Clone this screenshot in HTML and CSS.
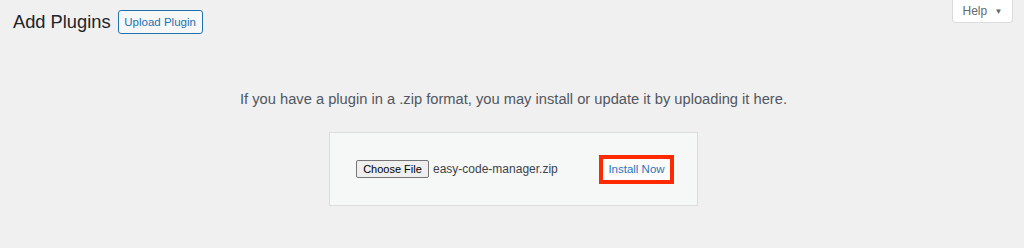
FILE: index.html
```html
<!DOCTYPE html>
<html lang="en">
<head>
    <meta charset="UTF-8">
    <title>Add Plugins</title>
    <link rel="stylesheet" href="styles.css">
</head>
<body>
    <div class="wrap">
        <div class="top-bar">
            <div class="title-row">
                <h1>Add Plugins</h1>
                <a class="page-title-action" href="#">Upload Plugin</a>
            </div>
            <button class="help-link">Help <span class="arrow">&#9660;</span></button>
        </div>

        <div class="upload-plugin">
            <p class="install-help">If you have a plugin in a .zip format, you may install or update it by uploading it here.</p>
            <form class="upload-form">
                <div class="file-field">
                    <span class="file-button">Choose File</span>
                    <span class="file-name">easy-code-manager.zip</span>
                </div>
                <span class="install-now">Install Now</span>
            </form>
        </div>
    </div>
</body>
</html>
```

FILE: styles.css
```css
* {
    margin: 0;
    padding: 0;
    box-sizing: border-box;
}
body {
    font-family: 'Liberation Sans', Arial, sans-serif;
    background-color: #f0f0f1;
    color: #1d2327;
}
.wrap {
    height: 248px;
}
.top-bar {
    display: flex;
    justify-content: space-between;
    align-items: flex-start;
    padding: 0 11px 0 13px;
}
.title-row {
    display: flex;
    align-items: center;
    gap: 7px;
    padding-top: 10px;
}
h1 {
    font-size: 18.3px;
    font-weight: 400;
    line-height: 24px;
    color: #1d2327;
}
.page-title-action {
    display: inline-block;
    height: 24px;
    width: 85px;
    line-height: 22px;
    text-align: center;
    font-size: 11.5px;
    color: #2271b1;
    text-decoration: none;
    border: 1px solid #2271b1;
    border-radius: 3px;
    background-color: #f6f7f7;
}
.help-link {
    height: 23px;
    width: 61px;
    font-family: inherit;
    font-size: 12px;
    color: #646970;
    background-color: #fff;
    border: 1px solid #dcdcde;
    border-top: none;
    border-radius: 0 0 4px 4px;
}
.help-link .arrow {
    font-size: 8px;
    margin-left: 4px;
    vertical-align: 1px;
}
.upload-plugin {
    text-align: center;
    padding: 55px 0 0 3px;
}
.install-help {
    font-size: 14.7px;
    line-height: 20px;
    color: #50575e;
}
.upload-form {
    display: flex;
    justify-content: space-between;
    align-items: center;
    width: 369px;
    height: 74px;
    margin: 23px auto 0;
    padding: 0 23px 0 26px;
    background-color: #f6f7f7;
    border: 1px solid #dcdcde;
}
.file-field {
    display: flex;
    align-items: center;
    gap: 4px;
}
.file-button {
    display: inline-block;
    width: 73px;
    height: 18px;
    line-height: 16px;
    text-align: center;
    font-size: 11px;
    color: #000;
    background-color: #efefef;
    border: 1px solid #767676;
    border-radius: 2px;
}
.file-name {
    font-size: 12px;
    color: #3c434a;
}
.install-now {
    display: inline-block;
    width: 75px;
    height: 29px;
    line-height: 21px;
    font-size: 11.5px;
    color: #2a76b8;
    background-color: #fcfcfc;
    border: 4px solid #ff2a00;
}
```
